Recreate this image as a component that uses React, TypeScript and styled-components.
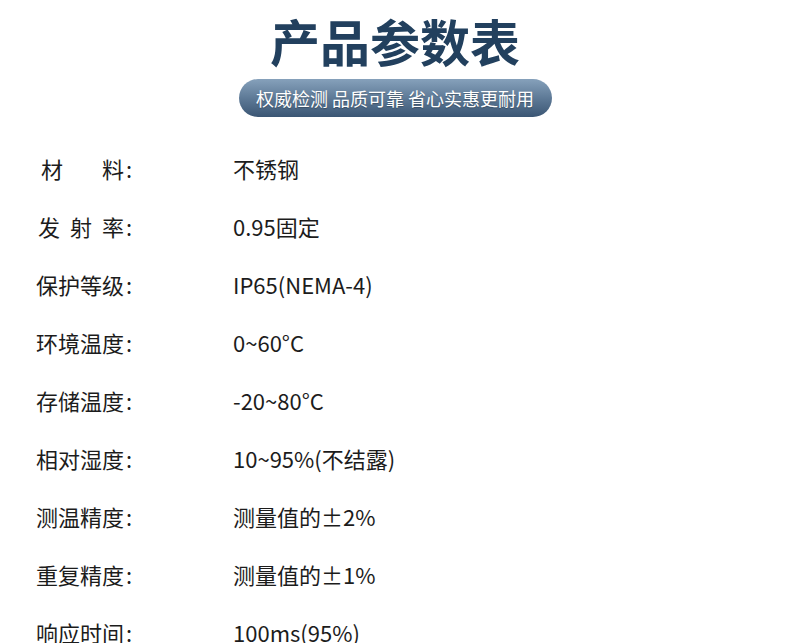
import styled, { createGlobalStyle } from 'styled-components'

const GlobalStyle = createGlobalStyle`
    body {
        margin: 0;
        background: #ffffff;
        font-family: "Noto Sans CJK SC", "Noto Sans", sans-serif;
    }
`

const Page = styled.div`
    width: 790px;
    height: 643px;
    overflow: hidden;
    display: flex;
    flex-direction: column;
    align-items: center;
    & > * {
        flex-shrink: 0;
    }
`

const Title = styled.h1`
    margin: 10px 0 0;
    font-size: 50px;
    line-height: 60px;
    font-weight: 700;
    color: #22405e;
    letter-spacing: 0;
`

const Pill = styled.div`
    margin-top: 9px;
    width: 313px;
    height: 38px;
    border-radius: 19px;
    background: linear-gradient(to bottom, #86a1bb 0%, #5e7a97 50%, #3b5674 100%);
    display: flex;
    align-items: center;
    justify-content: center;
    color: #ffffff;
    font-size: 18px;
    white-space: pre;
    text-shadow: 0 1px 1px rgba(0, 0, 0, 0.25);
`

const Table = styled.div`
    align-self: stretch;
    margin-top: 22px;
    padding-left: 36px;
    display: flex;
    flex-direction: column;
`

const Row = styled.div`
    height: 58px;
    flex-shrink: 0;
    display: flex;
    align-items: center;
    font-size: 22px;
    color: #1c1c1c;
`

const Label = styled.div`
    width: 197px;
    display: flex;
    align-items: center;
`

const LabelText = styled.span<{ $indent?: number }>`
    width: ${p => 88 - (p.$indent || 0)}px;
    margin-left: ${p => p.$indent || 0}px;
    text-align: justify;
    text-align-last: justify;
`

const Colon = styled.span`
    margin-left: 2px;
`

const Value = styled.div``

const rows: [string, string, number?][] = [
    ['材料', '不锈钢', 5],
    ['发射率', '0.95固定', 2],
    ['保护等级', 'IP65(NEMA-4)'],
    ['环境温度', '0~60°C'],
    ['存储温度', '-20~80°C'],
    ['相对湿度', '10~95%(不结露)'],
    ['测温精度', '测量值的±2%'],
    ['重复精度', '测量值的±1%'],
    ['响应时间', '100ms(95%)'],
]

export default function App() {
    return <>
        <GlobalStyle />
        <Page>
            <Title>产品参数表</Title>
            <Pill>权威检测 品质可靠 省心实惠更耐用</Pill>
            <Table>
                {rows.map(([label, value, indent]) => (
                    <Row key={label}>
                        <Label>
                            <LabelText $indent={indent}>{label}</LabelText>
                            <Colon>:</Colon>
                        </Label>
                        <Value>{value}</Value>
                    </Row>
                ))}
            </Table>
        </Page>
    </>
}
